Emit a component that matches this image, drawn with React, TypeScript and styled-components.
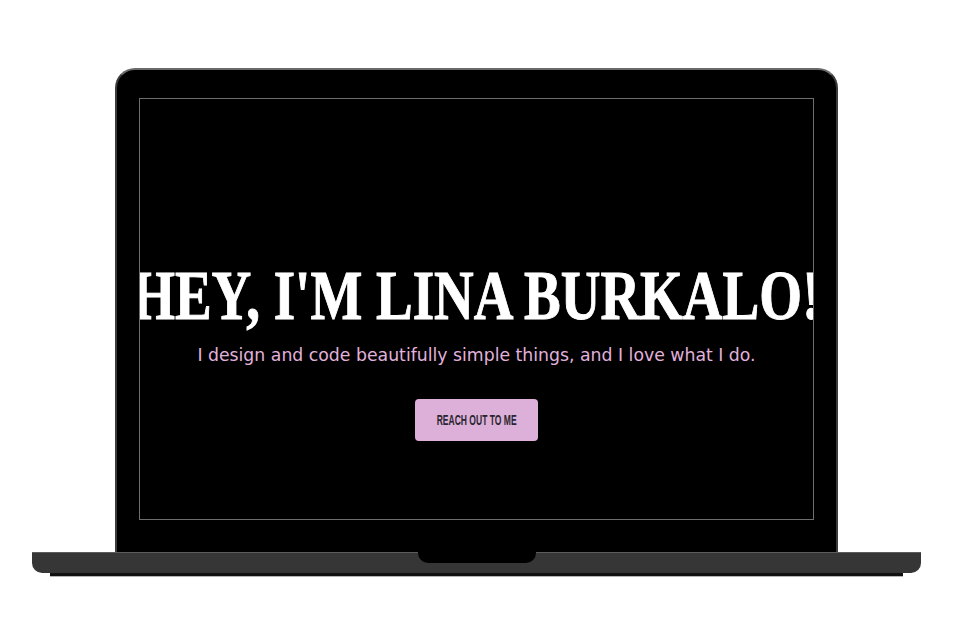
import React from "react";
import styled, { createGlobalStyle } from "styled-components";

const Global = createGlobalStyle`
  html, body { margin: 0; padding: 0; background: #ffffff; }
  body { font-family: "DejaVu Sans", sans-serif; }
  * { box-sizing: border-box; }
`;

const Page = styled.div`
  width: 958px;
  height: 644px;
  display: flex;
  flex-direction: column;
  align-items: center;
  padding-top: 68px;
  padding-right: 5px;
`;

const Lid = styled.div`
  width: 723px;
  height: 484px;
  background: #000;
  border: 2px solid #3c3c3c;
  border-top-color: #6a6a6a;
  border-bottom: none;
  border-radius: 20px 20px 0 0;
  padding: 28px 22px 32px;
  display: flex;
`;

const Screen = styled.div`
  flex: 1;
  border: 1px solid #6e6e6e;
  overflow: hidden;
  display: flex;
  flex-direction: column;
  align-items: center;
  padding-top: 162px;
`;

const Heading = styled.h1`
  margin: 0;
  white-space: nowrap;
  font-family: "Liberation Serif", "Times New Roman", serif;
  font-weight: 700;
  font-size: 70px;
  line-height: 70px;
  color: #ffffff;
  -webkit-text-stroke: 1px #ffffff;
  transform: scaleX(0.785);
`;

const Tagline = styled.p`
  margin: 13px 0 0;
  white-space: nowrap;
  font-family: "DejaVu Sans", sans-serif;
  font-size: 17.3px;
  line-height: 22px;
  color: #e0b2dc;
`;

const Button = styled.button`
  margin-top: 33px;
  width: 123px;
  height: 42px;
  border: none;
  border-radius: 4px;
  background: #dcb0d8;
  display: flex;
  align-items: center;
  justify-content: center;
  padding: 0;
  cursor: pointer;
`;

const ButtonLabel = styled.span`
  display: inline-block;
  white-space: nowrap;
  font-family: "Liberation Sans", Arial, sans-serif;
  font-weight: 700;
  font-size: 15.5px;
  color: #2a2530;
  transform: scaleX(0.55);
`;

const Base = styled.div`
  width: 889px;
  height: 21px;
  background: #363636;
  border-top: 1px solid #5c5c5c;
  border-radius: 0 0 10px 10px;
  display: flex;
  justify-content: center;
`;

const Notch = styled.div`
  width: 118px;
  height: 11px;
  margin-top: -1px;
  background: #000;
  border-radius: 0 0 10px 10px;
`;

const Foot = styled.div`
  width: 853px;
  height: 4px;
  background: #111;
  border-bottom: 1px solid #b4b4b4;
`;

export default function App() {
  return (
    <>
      <Global />
      <Page>
        <Lid>
          <Screen>
            <Heading>HEY, I'M LINA BURKALO!</Heading>
            <Tagline>
              I design and code beautifully simple things, and I love what I do.
            </Tagline>
            <Button>
              <ButtonLabel>REACH OUT TO ME</ButtonLabel>
            </Button>
          </Screen>
        </Lid>
        <Base>
          <Notch />
        </Base>
        <Foot />
      </Page>
    </>
  );
}
